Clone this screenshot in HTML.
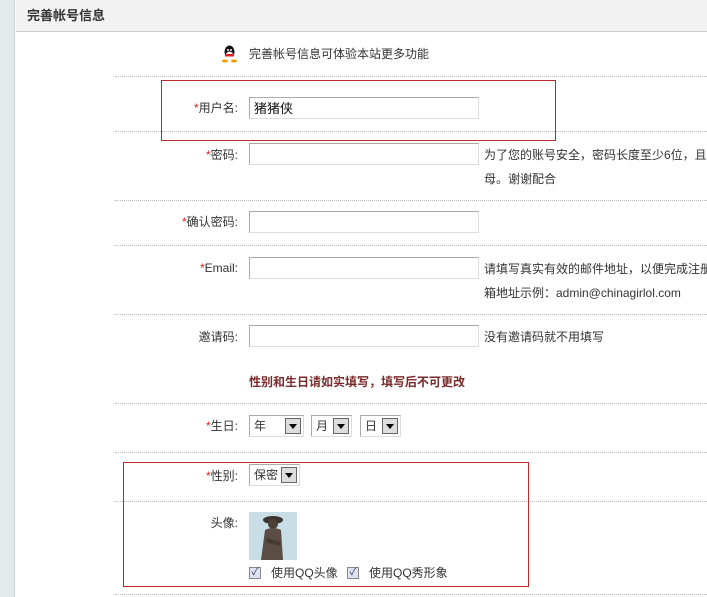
<!DOCTYPE html>
<html><head><meta charset="utf-8"><style>
*{margin:0;padding:0;box-sizing:border-box}
body{width:707px;height:597px;overflow:hidden;background:#fff;font-family:"Liberation Sans","Noto Sans CJK SC",sans-serif;font-size:12px;line-height:14px;color:#333;position:relative}
.strip{position:absolute;left:0;top:0;width:15px;height:597px;background:#e3eaec;border-right:1px solid #c9d3d6}
.hd{position:absolute;left:16px;top:0;width:691px;height:32px;background:#f2f2f2;border-bottom:1px solid #ccc;font-weight:bold;font-size:13px;line-height:32px;padding-left:11px;color:#333}
.dl{position:absolute;left:115px;width:592px;border-top:1px dotted #bbb}
.lb{position:absolute;right:469px;text-align:right;white-space:nowrap}
.lb b{color:#d22;font-weight:normal}
.in{position:absolute;left:249px;width:230px;height:22px;border:1px solid #aaa;border-right-color:#ddd;border-bottom-color:#ddd;background:#fff;padding-left:4px;line-height:22px;font-size:13px;color:#111}
.t{position:absolute;white-space:nowrap}
.red{position:absolute;border:1px solid #c0272d}
.sel{position:absolute;height:22px;border:1px solid #aaa;border-right-color:#ddd;border-bottom-color:#ddd;background:#fff;padding-left:4px;line-height:20px;font-size:12px}
.ar{position:absolute;right:2px;top:2px;width:16px;height:16px;border:1px solid #666;background:#ddd}
.ar:after{content:"";position:absolute;left:3px;top:5px;border-left:4px solid transparent;border-right:4px solid transparent;border-top:5px solid #000}
.cb{position:absolute;width:12px;height:12px;border:1px solid #888;background:#dde4ef;color:#335;font-size:10px;line-height:10px;text-align:center}
</style></head><body>
<div class="strip"></div>
<div class="hd">完善帐号信息</div>

<svg style="position:absolute;left:221px;top:45px" width="17" height="18" viewBox="0 0 17 18"><ellipse cx="8.5" cy="7" rx="5" ry="6.5" fill="#111"/><ellipse cx="8.5" cy="11" rx="4" ry="4.5" fill="#fff"/><rect x="4" y="9" width="9" height="2.5" fill="#d22"/><ellipse cx="4" cy="16" rx="3" ry="1.5" fill="#e90"/><ellipse cx="13" cy="16" rx="3" ry="1.5" fill="#e90"/><circle cx="7" cy="5" r="1" fill="#fff"/><circle cx="10" cy="5" r="1" fill="#fff"/></svg>
<div class="t" style="left:249px;top:47px">完善帐号信息可体验本站更多功能</div>
<div class="dl" style="top:76px"></div>

<div class="lb" style="top:101px"><b>*</b>用户名:</div>
<div class="in" style="top:97px">猪猪侠</div>
<div class="dl" style="top:131px"></div>

<div class="lb" style="top:148px"><b>*</b>密码:</div>
<div class="in" style="top:143px"></div>
<div class="t" style="left:484px;top:148px">为了您的账号安全，密码长度至少6位，且最</div>
<div class="t" style="left:484px;top:172px">母。谢谢配合</div>
<div class="dl" style="top:200px"></div>

<div class="lb" style="top:215px"><b>*</b>确认密码:</div>
<div class="in" style="top:211px"></div>
<div class="dl" style="top:245px"></div>

<div class="lb" style="top:261px"><b>*</b>Email:</div>
<div class="in" style="top:257px"></div>
<div class="t" style="left:484px;top:262px">请填写真实有效的邮件地址，以便完成注册</div>
<div class="t" style="left:484px;top:286px">箱地址示例：admin@chinagirlol.com</div>
<div class="dl" style="top:314px"></div>

<div class="lb" style="top:330px">邀请码:</div>
<div class="in" style="top:325px"></div>
<div class="t" style="left:484px;top:330px">没有邀请码就不用填写</div>

<div class="t" style="left:249px;top:375px;color:#7a2a2a;font-weight:bold">性别和生日请如实填写，填写后不可更改</div>
<div class="dl" style="top:403px"></div>

<div class="lb" style="top:419px"><b>*</b>生日:</div>
<div class="sel" style="left:249px;top:415px;width:55px">年<span class="ar"></span></div>
<div class="sel" style="left:311px;top:415px;width:41px">月<span class="ar"></span></div>
<div class="sel" style="left:360px;top:415px;width:41px">日<span class="ar"></span></div>
<div class="dl" style="top:452px"></div>

<div class="lb" style="top:469px"><b>*</b>性别:</div>
<div class="sel" style="left:249px;top:464px;width:51px">保密<span class="ar"></span></div>
<div class="dl" style="top:501px"></div>

<div class="lb" style="top:516px">头像:</div>
<svg style="position:absolute;left:249px;top:512px" width="48" height="48" viewBox="0 0 48 48"><rect width="48" height="48" fill="#c9dde6"/><ellipse cx="24" cy="8" rx="10" ry="4" fill="#3a3530"/><circle cx="24" cy="12" r="5" fill="#4a4038"/><path d="M16 18 Q24 14 32 18 L34 48 L12 48 Z" fill="#5a4d44"/><path d="M18 26 L32 30 L30 34 L17 30Z" fill="#463b33"/></svg>
<div class="cb" style="left:249px;top:567px">✓</div>
<div class="t" style="left:271px;top:566px">使用QQ头像</div>
<div class="cb" style="left:347px;top:567px">✓</div>
<div class="t" style="left:369px;top:566px">使用QQ秀形象</div>
<div class="dl" style="top:594px"></div>

<div class="red" style="left:161px;top:80px;width:395px;height:61px"></div>
<div class="red" style="left:123px;top:462px;width:406px;height:125px"></div>
</body></html>
